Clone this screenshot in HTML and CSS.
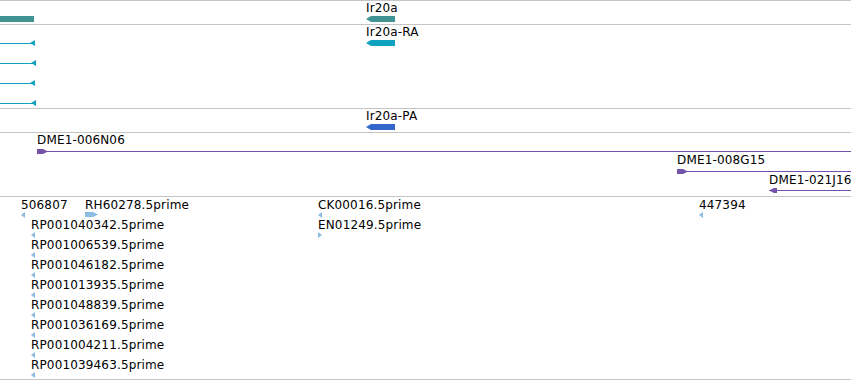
FILE: index.html
```html
<!DOCTYPE html>
<html lang="en">
<head>
  <meta charset="UTF-8">
  <title>Ir20a region</title>
  <link rel="stylesheet" href="styles.css">
</head>
<body>
  <div class="tracks">
    <!-- genes -->
    <div class="track track-gene">
      <div class="bar gene-bar" style="left:0;top:15px;width:34px"></div>
      <div class="label" style="left:366px;top:0">Ir20a</div>
      <div class="bar gene-bar arrow-left" style="left:366px;top:15px;width:29px"></div>
    </div>

    <!-- transcripts -->
    <div class="track track-mrna">
      <div class="hline mrna-line" style="left:0;top:18px;width:32px"></div>
      <div class="tri-left mrna-tri" style="left:30px;top:15px"></div>
      <div class="hline mrna-line" style="left:0;top:38px;width:34px"></div>
      <div class="tri-left mrna-tri" style="left:31px;top:35px"></div>
      <div class="hline mrna-line" style="left:0;top:58px;width:32px"></div>
      <div class="tri-left mrna-tri" style="left:30px;top:55px"></div>
      <div class="hline mrna-line" style="left:0;top:78px;width:34px"></div>
      <div class="tri-left mrna-tri" style="left:31px;top:75px"></div>
      <div class="label" style="left:366px;top:0">Ir20a-RA</div>
      <div class="bar mrna-bar arrow-left" style="left:366px;top:15px;width:29px"></div>
    </div>

    <!-- polypeptides -->
    <div class="track track-protein">
      <div class="label" style="left:366px;top:0">Ir20a-PA</div>
      <div class="bar protein-bar arrow-left" style="left:366px;top:15px;width:29px"></div>
    </div>

    <!-- BAC clones -->
    <div class="track track-clone">
      <div class="label" style="left:37px;top:0">DME1-006N06</div>
      <div class="hline clone-line" style="left:37px;top:18px;right:0"></div>
      <div class="bar clone-bar arrow-right" style="left:37px;top:16px;width:11px"></div>

      <div class="label" style="left:677px;top:20px">DME1-008G15</div>
      <div class="hline clone-line" style="left:677px;top:38px;right:0"></div>
      <div class="bar clone-bar arrow-right" style="left:677px;top:36px;width:11px"></div>

      <div class="label" style="left:769px;top:40px">DME1-021J16</div>
      <div class="hline clone-line" style="left:769px;top:57px;right:0"></div>
      <div class="bar clone-bar arrow-left" style="left:769px;top:55px;width:8px"></div>
    </div>

    <!-- ESTs -->
    <div class="track track-est">
      <div class="label" style="left:21px;top:1px">506807</div>
      <div class="tri-left est-tri" style="left:21px;top:15px"></div>
      <div class="label" style="left:85px;top:1px">RH60278.5prime</div>
      <div class="bar est-bar arrow-right" style="left:85px;top:15px;width:13px"></div>
      <div class="label" style="left:318px;top:1px">CK00016.5prime</div>
      <div class="tri-left est-tri" style="left:318px;top:15px"></div>
      <div class="label" style="left:699px;top:1px">447394</div>
      <div class="tri-left est-tri" style="left:699px;top:15px"></div>

      <div class="label" style="left:318px;top:21px">EN01249.5prime</div>
      <div class="tri-right est-tri" style="left:318px;top:35px"></div>

      <div class="label" style="left:31px;top:21px">RP001040342.5prime</div>
      <div class="tri-left est-tri" style="left:31px;top:35px"></div>
      <div class="label" style="left:31px;top:41px">RP001006539.5prime</div>
      <div class="tri-left est-tri" style="left:31px;top:55px"></div>
      <div class="label" style="left:31px;top:61px">RP001046182.5prime</div>
      <div class="tri-left est-tri" style="left:31px;top:75px"></div>
      <div class="label" style="left:31px;top:81px">RP001013935.5prime</div>
      <div class="tri-left est-tri" style="left:31px;top:95px"></div>
      <div class="label" style="left:31px;top:101px">RP001048839.5prime</div>
      <div class="tri-left est-tri" style="left:31px;top:115px"></div>
      <div class="label" style="left:31px;top:121px">RP001036169.5prime</div>
      <div class="tri-left est-tri" style="left:31px;top:135px"></div>
      <div class="label" style="left:31px;top:141px">RP001004211.5prime</div>
      <div class="tri-left est-tri" style="left:31px;top:155px"></div>
      <div class="label" style="left:31px;top:161px">RP001039463.5prime</div>
      <div class="tri-left est-tri" style="left:31px;top:175px"></div>
    </div>
    <div class="track-end"></div>
  </div>
</body>
</html>
```

FILE: styles.css
```css
body {
  margin: 0;
  background: #fff;
  font-family: "DejaVu Sans", Verdana, sans-serif;
  font-size: 12px;
  color: #000;
}
.tracks {
  width: 851px;
  height: 380px;
  overflow: hidden;
}
.track {
  position: relative;
  box-sizing: border-box;
  border-top: 1px solid #c4c4c4;
  overflow: hidden;
}
.track-gene { height: 24px; }
.track-mrna { height: 84px; }
.track-protein { height: 24px; }
.track-clone { height: 64px; }
.track-est { height: 183px; }
.track-end {
  border-top: 1px solid #c4c4c4;
  height: 0;
}

.label {
  position: absolute;
  line-height: 14px;
  letter-spacing: 0.15px;
  white-space: nowrap;
}
.bar {
  position: absolute;
  height: 6px;
}
.hline {
  position: absolute;
  height: 1px;
}
.arrow-left {
  clip-path: polygon(0 50%, 5px 0, 100% 0, 100% 100%, 5px 100%);
}
.arrow-right {
  clip-path: polygon(0 0, calc(100% - 5px) 0, 100% 50%, calc(100% - 5px) 100%, 0 100%);
}
.tri-left, .tri-right {
  position: absolute;
  width: 0;
  height: 0;
}

/* genes */
.gene-bar { background: #3f9393; }

/* transcripts */
.mrna-bar { background: #10a0c0; }
.mrna-line { background: #10a0c0; }
.mrna-tri {
  border-top: 3.5px solid transparent;
  border-bottom: 3.5px solid transparent;
  border-right: 5px solid #10a0c0;
}

/* polypeptides */
.protein-bar { background: #3467cc; }

/* clones */
.clone-bar { background: #7253a8; height: 5px; }
.clone-line { background: #7253a8; }

/* ESTs */
.est-bar { background: #8bbde2; height: 5px; }
.est-tri {
  border-top: 3px solid transparent;
  border-bottom: 3px solid transparent;
}
.tri-left.est-tri { border-right: 4px solid #8bbde2; }
.tri-right.est-tri { border-left: 4px solid #8bbde2; }
```
